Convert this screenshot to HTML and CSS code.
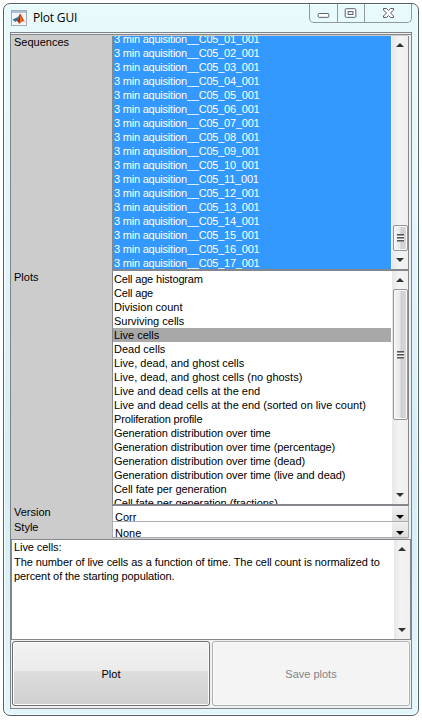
FILE: index.html
```html
<!DOCTYPE html>
<html lang="en">
<head>
<meta charset="utf-8">
<title>Plot GUI</title>
<link rel="stylesheet" href="styles.css">
</head>
<body>
<div class="window">
  <header class="titlebar">
    <svg class="app-icon" width="16" height="16" viewBox="0 0 16 16">
      <rect x=".5" y=".5" width="15" height="15" fill="#f4f6f8" stroke="#a3acb5"/>
      <path d="M1 1h14v2H1z" fill="#a9c3dc"/>
      <path d="M1.500 9.500 5 8l2-1 2-3 .5 3-2.500 4.500-1.500-.5-1 1z" fill="#2d6f9f"/>
      <path d="M9 3.500c1.500 1 3 5.500 5 8.500-1.500-1-2.500-1-3.500 0L8 14c-.5-1.500-1-2.500-2-3 1.500-1 2-5 3-7.500z" fill="#d9501e"/>
      <path d="M9 4c.5 2 .3 5-.8 9L7 11c1.200-1.500 1.500-4 2-7z" fill="#8c2414"/>
      <path d="M9.500 5c.8 2 1 4 .5 6l-1 1c.6-2 .8-4 .5-7z" fill="#f6a13c"/>
    </svg>
    <h1 class="title">Plot GUI</h1>
    <div class="controls">
      <svg class="control min" width="28" height="19" viewBox="0 0 28 19"><rect x="8.500" y="9.500" width="11" height="4" rx="1" fill="#fff" stroke="#555c6c"/></svg>
      <svg class="control max" width="27" height="19" viewBox="0 0 27 19"><rect x="7.500" y="4.500" width="11" height="9" rx="1" fill="#fff" stroke="#555c6c"/><rect x="10.500" y="7.500" width="5" height="3" fill="#e9f6f8" stroke="#555c6c"/></svg>
      <svg class="control" width="46" height="19" viewBox="0 0 46 19"><path d="M18.500 4.500h3l2 2 2-2h3v1.500l-3 3 3 3v1.500h-3l-2-2-2 2h-3V12l3-3-3-3z" fill="#fff" stroke="#555c6c"/></svg>
    </div>
  </header>
  <main class="client">
    <div class="form">
      <div class="label">Sequences</div>
      <div class="listbox sequences">
        <ul class="items">
          <li>3 min aquisition__C05_01_001</li><li>3 min aquisition__C05_02_001</li><li>3 min aquisition__C05_03_001</li><li>3 min aquisition__C05_04_001</li><li>3 min aquisition__C05_05_001</li><li>3 min aquisition__C05_06_001</li><li>3 min aquisition__C05_07_001</li><li>3 min aquisition__C05_08_001</li><li>3 min aquisition__C05_09_001</li><li>3 min aquisition__C05_10_001</li><li>3 min aquisition__C05_11_001</li><li>3 min aquisition__C05_12_001</li><li>3 min aquisition__C05_13_001</li><li>3 min aquisition__C05_14_001</li><li>3 min aquisition__C05_15_001</li><li>3 min aquisition__C05_16_001</li><li>3 min aquisition__C05_17_001</li>
        </ul>
        <div class="scroll"><i class="arrow up"></i><div class="track end"><div class="thumb short"><i class="grip"></i></div></div><i class="arrow down"></i></div>
      </div>
      <div class="label">Plots</div>
      <div class="listbox plots">
        <ul class="items">
          <li class="tight">Cell age histogram</li><li class="tight">Cell age</li><li>Division count</li><li>Surviving cells</li><li class="selected">Live cells</li><li>Dead cells</li><li>Live, dead, and ghost cells</li><li>Live, dead, and ghost cells (no ghosts)</li><li>Live and dead cells at the end</li><li>Live and dead cells at the end (sorted on live count)</li><li class="tight">Proliferation profile</li><li class="snug">Generation distribution over time</li><li class="snug">Generation distribution over time (percentage)</li><li class="snug">Generation distribution over time (dead)</li><li class="snug">Generation distribution over time (live and dead)</li><li class="snug">Cell fate per generation</li><li class="snug">Cell fate per generation (fractions)</li>
        </ul>
        <div class="scroll"><i class="arrow up"></i><div class="track"><div class="thumb long"><i class="grip"></i></div></div><i class="arrow down"></i></div>
      </div>
      <div class="label">Version</div>
      <div class="select"><span>Corr</span><b class="drop"></b></div>
      <div class="label style-label">Style</div>
      <div class="select"><span>None</span><b class="drop"></b></div>
    </div>
    <div class="description">
      <p>Live cells:<br>The number of live cells as a function of time. The cell count is normalized to<br>percent of the starting population.</p>
      <div class="scroll"><i class="arrow up"></i><div class="track"></div><i class="arrow down"></i></div>
    </div>
    <div class="buttons">
      <button class="button">Plot</button>
      <button class="button" disabled>Save plots</button>
    </div>
  </main>
</div>
</body>
</html>
```
FILE: styles.css
```css
* { box-sizing: border-box; }
body {
  margin: 0;
  padding: 3px;
  height: 720px;
  overflow: hidden;
  background: #fff;
  color: #000;
  font: 11px/14px "Liberation Sans", Arial, sans-serif;
}
.window {
  width: 416px;
  height: 713px;
  padding: 0 6px 6px;
  border: 1px solid #566064;
  border-radius: 7px;
  background: linear-gradient(180deg, #e9fafc 0, #e2f5fb 35%, #d5edf4 65%, #e3f6fc 100%);
  box-shadow: inset 0 0 0 1px #f8ffff;
}
.titlebar {
  display: flex;
  height: 28px;
  padding-left: 1px;
}
.app-icon { margin-top: 6px; }
.title {
  margin: 4px 0 0 6px;
  font: 12px/19px "Open Sans", "Noto Sans", sans-serif;
  letter-spacing: -0.2px;
}
.controls {
  display: flex;
  height: 19px;
  margin: 0 0 0 auto;
  border: 1px solid #8d9ba0;
  border-top: 0;
  border-radius: 0 0 5px 5px;
}
.control { display: block; }
.min, .max { border-right: 1px solid #8d9ba0; }
.client {
  height: 677px;
  padding: 1px 0 0;
  border: 1px solid #7e8588;
  background: #f0f0f0;
}
.form {
  display: grid;
  grid-template-columns: 100px 297px;
  grid-template-rows: 235px 235px 16px 16px;
  height: 505px;
  padding: 1px;
  border: 0 solid #85878c;
  border-top-width: 1px;
  background: linear-gradient(90deg, #ccc 397px, #f0f0f0 397px);
}
.label {
  margin-top: -1px;
  padding-left: 2px;
}
.style-label { margin-top: -2px; }
.listbox {
  display: flex;
  overflow: hidden;
  border: solid #85878c;
  border-width: 0 1px 2px;
  background: #fff;
}
.items {
  flex: 1;
  margin: 0;
  padding: 0;
  list-style: none;
  white-space: nowrap;
}
.items li { height: 14px; padding-left: 1px; }
.sequences .items {
  background: #39f;
  color: #fff;
  letter-spacing: -0.22px;
}
.sequences li:first-child { margin-top: -4px; }
.plots .items { padding-top: 1px; }
.tight { letter-spacing: -0.16px; }
.snug { letter-spacing: -0.07px; }
.selected { background: #a8a8a8; }
.scroll {
  display: flex;
  flex-direction: column;
  align-items: center;
  width: 17px;
  border-left: 1px solid #fff;
  background: linear-gradient(90deg, #e8e8e8, #f3f3f3 45%, #efefef);
}
.arrow {
  width: 0;
  height: 0;
  border: solid transparent;
  border-width: 0 4px;
}
.up { margin: 7px 0; border-bottom: 4px solid #333; }
.down { margin: 7px 0; border-top: 4px solid #333; }
.track {
  display: flex;
  flex-direction: column;
  flex: 1;
  width: 15px;
}
.end { justify-content: flex-end; }
.thumb {
  display: flex;
  align-items: center;
  justify-content: center;
  border: 1px solid #949494;
  border-radius: 2px;
  background: linear-gradient(90deg, #f5f5f5, #e8e8ea 45%, #cecfd2 55%, #d9d9dc);
  box-shadow: inset 0 0 0 1px #fafafa;
}
.short { height: 26px; }
.long { height: 131px; }
.grip {
  width: 7px;
  height: 8px;
  background: repeating-linear-gradient(180deg, #555 0 1px, #999 1px 2px, #f8f8f8 2px 3px);
}
.select {
  display: flex;
  overflow: hidden;
  border: solid #abadb3;
  border-width: 0 1px 1px;
  background: #fff;
}
.select span { flex: 1; padding: 4px 0 0 2px; }
.drop {
  display: flex;
  width: 16px;
  background: linear-gradient(180deg, #f1f1f1, #ddd);
}
.drop::after {
  content: "";
  width: 8px;
  height: 4px;
  margin: 9px 0 0 4px;
  background: #000;
  clip-path: polygon(0 0, 100% 0, 50% 100%);
}
.description {
  display: flex;
  height: 101px;
  border: 1px solid #85878c;
  background: #fff;
}
.description p {
  flex: 1;
  margin: 0;
  padding-left: 2px;
  letter-spacing: -0.08px;
  line-height: 14.500px;
  white-space: nowrap;
}
.buttons {
  display: flex;
  gap: 2px;
  height: 66px;
  padding: 1px 1px 0;
}
.button {
  flex: 1;
  margin: 0;
  padding: 0;
  border: 1px solid #707070;
  border-radius: 3px;
  background: linear-gradient(180deg, #f2f2f2 0, #ebebeb 46%, #ddd 47%, #cfcfcf 100%);
  box-shadow: inset 0 0 0 1px #fbfbfb;
  color: #000;
  font: inherit;
}
.button:disabled {
  border-color: #adb2b5;
  background: #f4f4f4;
  color: #838383;
}
```
